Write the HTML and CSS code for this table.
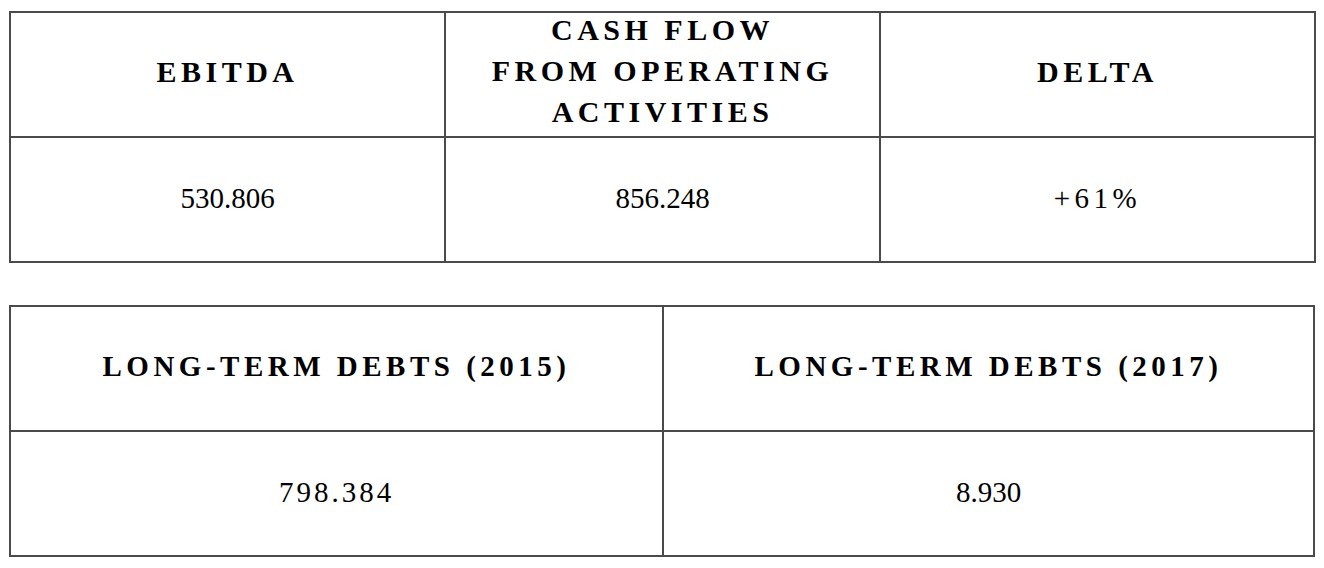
FILE: index.html
```html
<!DOCTYPE html>
<html lang="en">
<head>
<meta charset="utf-8">
<title>Financial figures</title>
<link rel="stylesheet" href="styles.css">
</head>
<body>
<main class="page">
  <table class="fig fig-three">
    <colgroup><col class="c3"><col class="c3"><col class="c3"></colgroup>
    <thead>
      <tr>
        <th class="head">EBITDA</th>
        <th class="head head-multi"><div class="stack">CASH FLOW<br>FROM OPERATING<br>ACTIVITIES</div></th>
        <th class="head">DELTA</th>
      </tr>
    </thead>
    <tbody>
      <tr>
        <td class="val">530.806</td>
        <td class="val">856.248</td>
        <td class="val val-wide">+61%</td>
      </tr>
    </tbody>
  </table>

  <table class="fig fig-two">
    <colgroup><col class="c2a"><col class="c2b"></colgroup>
    <thead>
      <tr>
        <th class="head head-sm">LONG-TERM DEBTS (2015)</th>
        <th class="head head-sm">LONG-TERM DEBTS (2017)</th>
      </tr>
    </thead>
    <tbody>
      <tr>
        <td class="val val-mid">798.384</td>
        <td class="val">8.930</td>
      </tr>
    </tbody>
  </table>
</main>
</body>
</html>
```

FILE: styles.css
```css
html, body {
  margin: 0;
  padding: 0;
  background: #ffffff;
}

.page {
  padding: 11px 9px 0 9px;
  display: flex;
  flex-direction: column;
  gap: 42px;
  font-family: "Liberation Serif", "Times New Roman", serif;
  color: #000;
}

.fig {
  width: 1306px;
  table-layout: fixed;
  border-collapse: separate;
  border-spacing: 0;
  border-top: 2px solid #4a4a4a;
  border-left: 2px solid #4a4a4a;
}

.fig th,
.fig td {
  border-right: 2px solid #4a4a4a;
  border-bottom: 2px solid #4a4a4a;
  padding: 0;
  text-align: center;
  vertical-align: middle;
}

.c3 { width: 435px; }
.c2a { width: 653px; }
.c2b { width: 651px; }

.fig .head {
  font-weight: bold;
  font-size: 30px;
  line-height: 41px;
  letter-spacing: 4.5px;
  height: 117px;
  padding-bottom: 6px;
}

.fig .head-multi {
  height: 123px;
  padding-bottom: 0;
}

.stack {
  margin: -4px 0 4px 0;
}

.fig .head-sm {
  font-size: 29px;
  letter-spacing: 4.5px;
  height: 119px;
  padding-bottom: 4px;
}

.fig .val {
  font-size: 29px;
  font-weight: normal;
  line-height: 34px;
  height: 119px;
  padding-bottom: 4px;
}

.val-wide {
  letter-spacing: 4.5px;
}

.val-mid {
  letter-spacing: 3px;
}
```
